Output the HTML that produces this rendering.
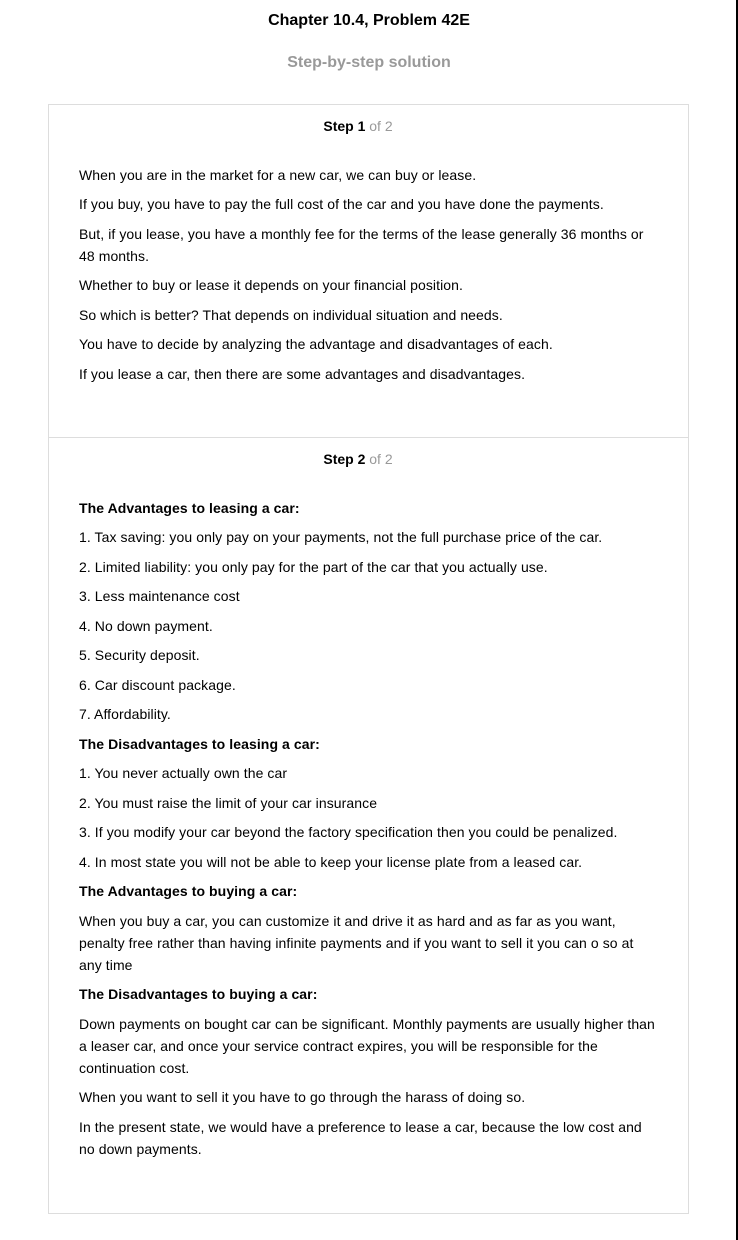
<!DOCTYPE html>
<html><head><meta charset="utf-8"><style>
html,body{margin:0;padding:0;background:#fff;}
body{width:738px;height:1240px;position:relative;overflow:hidden;font-family:"Liberation Sans",Arial,sans-serif;color:#000;}
.rb{position:absolute;right:0;top:0;width:2px;height:1240px;background:#000;}
.t1{position:absolute;top:10px;left:0;width:738px;text-align:center;font-weight:bold;font-size:16px;line-height:22px;}
.t2{position:absolute;top:52px;left:0;width:738px;text-align:center;font-weight:bold;font-size:16px;line-height:22px;color:#999;}
.box{position:absolute;left:48px;top:104px;width:639px;border:1px solid #ddd;}
.sec{padding:10px 31px 0 30px;box-sizing:border-box;}
.sec+.sec{border-top:1px solid #ddd;}
.lab{text-align:center;font-size:14px;line-height:22px;font-weight:bold;margin-bottom:26.5px;position:relative;left:-10px;}
.lab span{font-weight:normal;color:#999;}
p{margin:0 0 7.5px 0;font-size:14px;line-height:22px;letter-spacing:0.08px;}
p:last-child{margin-bottom:0;}
b{font-weight:bold;}
</style></head><body>
<div class="rb"></div>
<div class="t1">Chapter 10.4, Problem 42E</div>
<div class="t2">Step-by-step solution</div>
<div class="box">
<div class="sec" style="height:332px;">
<div class="lab">Step 1 <span>of 2</span></div>
<p>When you are in the market for a new car, we can buy or lease.</p>
<p>If you buy, you have to pay the full cost of the car and you have done the payments.</p>
<p>But, if you lease, you have a monthly fee for the terms of the lease generally 36 months or 48 months.</p>
<p>Whether to buy or lease it depends on your financial position.</p>
<p>So which is better? That depends on individual situation and needs.</p>
<p>You have to decide by analyzing the advantage and disadvantages of each.</p>
<p>If you lease a car, then there are some advantages and disadvantages.</p>
</div>
<div class="sec" style="height:776px;">
<div class="lab">Step 2 <span>of 2</span></div>
<p><b>The Advantages to leasing a car:</b></p>
<p>1. Tax saving: you only pay on your payments, not the full purchase price of the car.</p>
<p>2. Limited liability: you only pay for the part of the car that you actually use.</p>
<p>3. Less maintenance cost</p>
<p>4. No down payment.</p>
<p>5. Security deposit.</p>
<p>6. Car discount package.</p>
<p>7. Affordability.</p>
<p><b>The Disadvantages to leasing a car:</b></p>
<p>1. You never actually own the car</p>
<p>2. You must raise the limit of your car insurance</p>
<p>3. If you modify your car beyond the factory specification then you could be penalized.</p>
<p>4. In most state you will not be able to keep your license plate from a leased car.</p>
<p><b>The Advantages to buying a car:</b></p>
<p>When you buy a car, you can customize it and drive it as hard and as far as you want, penalty free rather than having infinite payments and if you want to sell it you can o so at any time</p>
<p><b>The Disadvantages to buying a car:</b></p>
<p>Down payments on bought car can be significant. Monthly payments are usually higher than a leaser car, and once your service contract expires, you will be responsible for the continuation cost.</p>
<p>When you want to sell it you have to go through the harass of doing so.</p>
<p>In the present state, we would have a preference to lease a car, because the low cost and no down payments.</p>
</div>
</div>
</body></html>
